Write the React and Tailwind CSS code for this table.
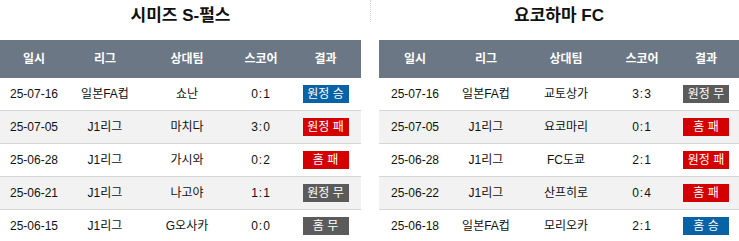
import React from "react";

const shimizu = [
  ["25-07-16", "일본FA컵", "쇼난", "0:1", "원정 승", "win"],
  ["25-07-05", "J1리그", "마치다", "3:0", "원정 패", "lose"],
  ["25-06-28", "J1리그", "가시와", "0:2", "홈 패", "lose"],
  ["25-06-21", "J1리그", "나고야", "1:1", "원정 무", "draw"],
  ["25-06-15", "J1리그", "G오사카", "0:0", "홈 무", "draw"],
];

const yokohama = [
  ["25-07-16", "일본FA컵", "교토상가", "3:3", "원정 무", "draw"],
  ["25-07-05", "J1리그", "요코마리", "0:1", "홈 패", "lose"],
  ["25-06-28", "J1리그", "FC도쿄", "2:1", "원정 패", "lose"],
  ["25-06-22", "J1리그", "산프히로", "0:4", "홈 패", "lose"],
  ["25-06-18", "일본FA컵", "모리오카", "2:1", "홈 승", "win"],
];

const badgeColor = {
  win: "bg-[#0862a6]",
  lose: "bg-[#d40000]",
  draw: "bg-[#5b5b5b]",
};

const Panel = ({ title, rows, cols }) => {
  return (
    <div className="flex flex-col">
      <div className="h-[40px] flex items-center justify-center pb-[8px] text-[17px] font-bold text-[#111]">
        {title}
      </div>
      <div className={`grid ${cols} h-[38px] bg-[#6b7784] items-center text-white font-bold text-[12px]`}>
        <div className="text-center">일시</div>
        <div className="text-center">리그</div>
        <div className="text-center">상대팀</div>
        <div className="text-center">스코어</div>
        <div className="text-center">결과</div>
      </div>
      {rows.map((r, i) => (
        <div
          key={i}
          className={`grid ${cols} h-[33px] items-center border-b border-[#d6d6d6] text-[12px] text-[#111] ${
            i % 2 === 1 ? "bg-[#f2f2f2]" : "bg-white"
          }`}
        >
          <div className="text-center">{r[0]}</div>
          <div className="text-center">{r[1]}</div>
          <div className="text-center">{r[2]}</div>
          <div className="text-center tracking-[1px]">{r[3]}</div>
          <div className="flex justify-center">
            <span
              className={`w-[46px] h-[18px] flex items-center justify-center text-white text-[12px] ${badgeColor[r[5]]}`}
            >
              {r[4]}
            </span>
          </div>
        </div>
      ))}
    </div>
  );
};

const App = () => {
  return (
    <div
      className="w-[739px] h-[241px] overflow-hidden bg-white flex"
      style={{ fontFamily: '"Liberation Sans", "Noto Sans CJK KR", sans-serif' }}
    >
      <div className="w-[361px]">
        <Panel
          title="시미즈 S-펄스"
          rows={shimizu}
          cols="grid-cols-[68px_74px_90px_58px_71px]"
        />
      </div>
      <div className="w-[18px] flex justify-center">
        <div className="h-[22px] border-l border-dotted border-[#d0d0d0]" />
      </div>
      <div className="w-[360px]">
        <Panel
          title="요코하마 FC"
          rows={yokohama}
          cols="grid-cols-[72px_70px_90px_62px_66px]"
        />
      </div>
    </div>
  );
};

export default App;
